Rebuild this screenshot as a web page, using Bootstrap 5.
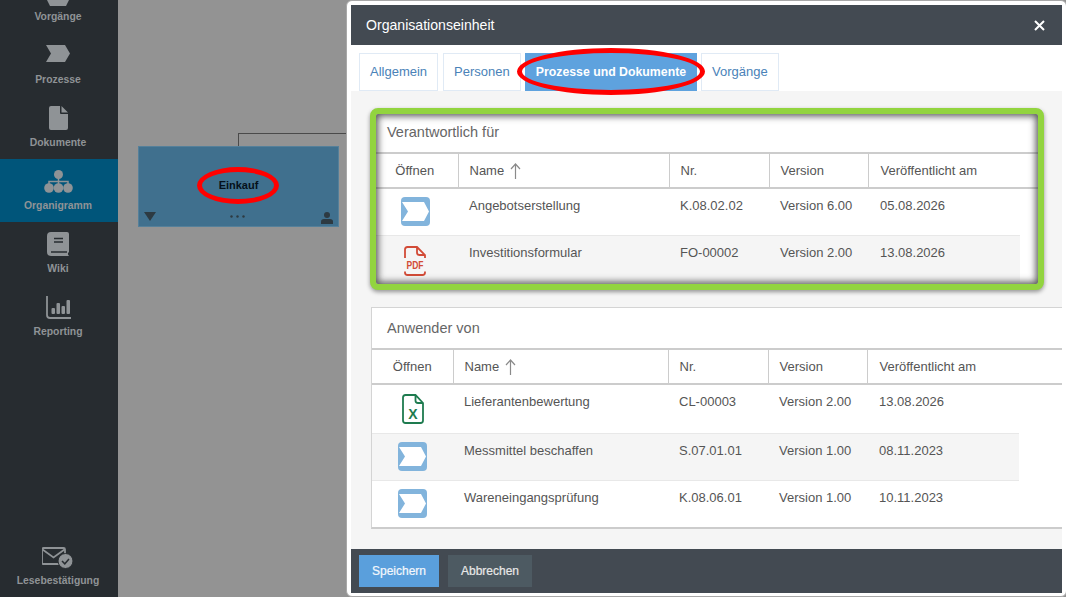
<!DOCTYPE html>
<html lang="de">
<head>
  <meta charset="utf-8">
  <title>Organisationseinheit</title>
  <meta name="viewport" content="width=device-width, initial-scale=1">
  <link href="https://cdn.jsdelivr.net/npm/bootstrap@5.3.3/dist/css/bootstrap.min.css" rel="stylesheet">
  <style>
    html,body{height:100%;overflow:hidden}
    body{font-family:"Liberation Sans",Arial,sans-serif;font-size:13px;background:#939393}
    .side-nav{width:118px;flex:none;background:#272c30;overflow:hidden}
    .side-item{height:63px;flex:none;padding:8px 2px 0 0;color:#8f9396;font-size:10.4px;font-weight:700;line-height:14px;text-decoration:none}
    .side-item:hover{color:#8f9396}
    .side-item.active{background:#00557a}
    .side-first{margin-top:-30px}
    .side-icon{height:28px;margin-bottom:4px}
    .side-icon svg{display:block}
    .side-last{padding-top:11px}
    .side-last .side-icon{margin-bottom:1px}
    .work-area{background:#939393}
    .org-line{position:absolute;left:120px;top:133px;width:110px;height:13px;border-top:1px solid #4a4a4a;border-left:1px solid #4a4a4a}
    .org-node{position:absolute;left:20px;top:146px;width:201px;height:81px;background:#40708e;border:1px solid #55809a;font-size:11px;font-weight:700;color:#05101a}
    .org-node .node-label{padding-top:28px;line-height:20px}
    .node-tri{position:absolute;left:5px;bottom:5px;width:0;height:0;border-left:6px solid transparent;border-right:6px solid transparent;border-top:9px solid #2d3a42}
    .node-dots{position:absolute;left:91px;bottom:8px;display:block}
    .node-user{position:absolute;right:5px;bottom:2px;display:block}
    .red-ring{position:absolute;border:5.5px solid #f00;border-radius:50%;pointer-events:none;z-index:5}
    .ring-node{left:79px;top:167px;width:82px;height:37px}
    .ring-tab{left:170px;top:47px;width:188px;height:47px}
    .dlg{position:absolute;left:228px;top:0;right:-1px;bottom:0;width:auto;padding:4px 4px 3px 4px;border:1px solid #a8a8a8;border-radius:6px;background:#fff;overflow:hidden;color:#555}
    .dlg .modal-header{height:40px;flex:none;padding:1px 17px 0 15px;background:#434a52;color:#fff;border:0;border-radius:0;font-size:14.1px}
    .dlg-close{padding:0;border:0;background:none;line-height:0}
    .tab-bar{flex:none;height:46px;padding:8px 0 0 8px}
    .tab-bar li:first-child{margin-right:1px}
    .tab-link{height:38px;padding:0 10px;line-height:36px;border:1px solid #e0eaf5;border-radius:0;color:#4a82b8;font-size:13px}
    .tab-link.active,.tab-link.active:hover{background:#5ea2de;border-color:#5ea2de;color:#fff;font-weight:700;font-size:12.3px}
    .dlg .modal-body{flex:1 1 auto;padding:17px 0 0 0;background:#f5f5f5;overflow:hidden;min-height:0}
    .box-green{position:relative;width:674px;height:182px;margin:0 0 17px 19px;border:6px solid #92d43f;border-radius:8px;background:#fff;box-shadow:0 2px 4px rgba(0,0,0,.4);overflow:hidden}
    .box-green::after{content:"";position:absolute;inset:-1px;box-shadow:inset 0 0 7px 3px rgba(40,40,40,.8);pointer-events:none}
    .box-plain{width:710px;margin-left:20px;border:1px solid #d4d4d4;border-bottom:2px solid #ccc;border-right:0;border-radius:0;background:#fff}
    .sect-head{height:38px;padding:0 0 0 11px;line-height:36px;font-size:14.5px;color:#666;background:#fff;border:0;border-radius:0}
    .box-plain .sect-head{height:40px;padding-left:15px;line-height:41px}
    .doc-table{--bs-table-bg:transparent;table-layout:fixed;width:100%;margin:0;color:#555;font-size:13px;line-height:16px}
    .doc-table th{height:35px;padding:0 0 0 11px;font-weight:400;vertical-align:middle;border-top:2px solid #ccc;border-bottom:2px solid #ccc;border-left:1px solid #ccc}
    .doc-table th:first-child{padding:0 4px 0 0;border-left:0;text-align:center}
    .doc-table td{height:47px;padding:9px 0 0 11px;vertical-align:top;border-bottom:1px solid #e8e8e8;border-top:0}
    .doc-table td:first-child{padding:8px 4px 0 0;text-align:center;line-height:0}
    .doc-table th:nth-child(5),.doc-table td:nth-child(5){padding-left:12px}
    .doc-table td:last-child{background:#fff;border-bottom:0;padding:0}
    .doc-table tbody tr:nth-child(even) td:not(:last-child){background:#f5f5f5}
    .doc-table tbody tr:last-child td{border-bottom:0}
    .doc-table tr.row-tall td{height:49px}
    .doc-table tr.row-tall td:first-child{padding-top:9px}
    .box-plain .doc-table th:first-child,.box-plain .doc-table td:first-child{padding-right:0}
    .ic-low{margin-top:2px}
    .sort-arrow{margin-left:2px;vertical-align:-4px;margin-top:-4px}
    .dlg .modal-footer{flex:none;height:44px;padding:6px 0 0 8px;background:#434a52;border:0;border-radius:0;justify-content:flex-start;align-items:flex-start;gap:9px}
    .dlg .modal-footer .btn{margin:0;height:32px;padding:0;border:0;border-radius:0;font-size:12px;line-height:32px;-webkit-text-stroke:.2px}
    .btn-save{width:80px;background:#5a9fdc;color:#f4f8fc}
    .btn-cancel{width:84px;background:#4d5a62;color:#e8e8e8}
  </style>
</head>
<body class="d-flex">

<svg class="d-none">
  <symbol id="ic-process" viewBox="0 0 29 29">
    <rect width="29" height="29" rx="4" fill="#82b4dc"/>
    <polygon points="1,5 23,5 28,14.5 23,24 1,24 7,14.5" fill="#fff"/>
  </symbol>
  <symbol id="ic-pdf" viewBox="0 0 22 30">
    <path d="M1 12V3.5Q1 1 3.5 1H13L21 9V12M13 1V6.5Q13 9 15.500 9H21M1 25.500V26.500Q1 29 3.500 29H18.500Q21 29 21 26.500V25.500" fill="none" stroke="#d24b37" stroke-width="1.800"/>
    <text x="11" y="23" text-anchor="middle" font-family="Liberation Sans" font-weight="700" font-size="11" textLength="17" lengthAdjust="spacingAndGlyphs" fill="#d24b37">PDF</text>
  </symbol>
  <symbol id="ic-xls" viewBox="0 0 22 30">
    <path d="M3.500 1H13.500L21 9V26.500Q21 29 18.500 29H3.500Q1 29 1 26.500V3.500Q1 1 3.500 1ZM13.500 1V6.500Q13.500 9 16 9H21" fill="none" stroke="#1e7b4f" stroke-width="1.800"/>
    <text x="11" y="24.500" text-anchor="middle" font-family="Liberation Sans" font-weight="700" font-size="14" fill="#1e7b4f">X</text>
  </symbol>
  <symbol id="ic-up" viewBox="0 0 11 16">
    <path d="M5.500 16V1M1 6L5.500 1L10 6" fill="none" stroke="#8a8a8a" stroke-width="1.200"/>
  </symbol>
</svg>

<nav class="side-nav d-flex flex-column">
  <a class="side-item side-first d-flex flex-column align-items-center" href="#">
    <span class="side-icon d-flex align-items-end"><svg width="24" height="24" viewBox="0 0 24 24"><path d="M1 2H23V18L20 24H4L1 18Z" fill="#8f9396"/></svg></span>
    Vorgänge
  </a>
  <a class="side-item d-flex flex-column align-items-center" href="#">
    <span class="side-icon d-flex align-items-start"><svg class="mt-1" width="24" height="17" viewBox="0 0 24 17"><polygon points="0,0 19,0 24,8.500 19,17 0,17 5,8.500" fill="#8f9396"/></svg></span>
    Prozesse
  </a>
  <a class="side-item d-flex flex-column align-items-center" href="#">
    <span class="side-icon d-flex align-items-center"><svg width="19" height="24" viewBox="0 0 19 24"><path d="M2 0H11V7Q11 8 12 8H19V22Q19 24 17 24H2Q0 24 0 22V2Q0 0 2 0ZM12.500 0L19 6.500H12.500Z" fill="#8f9396"/></svg></span>
    Dokumente
  </a>
  <a class="side-item active d-flex flex-column align-items-center" href="#">
    <span class="side-icon d-flex align-items-center"><svg width="29" height="23" viewBox="0 0 29 23"><g fill="#8f9396"><circle cx="14.500" cy="4.500" r="4.500"/><circle cx="5" cy="18" r="4.800"/><circle cx="14.500" cy="18" r="4.800"/><circle cx="24" cy="18" r="4.800"/></g><path d="M14.500 8V14M5 14V11.500H24V14" fill="none" stroke="#8f9396" stroke-width="1.500"/></svg></span>
    Organigramm
  </a>
  <a class="side-item d-flex flex-column align-items-center" href="#">
    <span class="side-icon d-flex align-items-center"><svg width="22" height="24" viewBox="0 0 22 24"><path d="M4 0H20Q22 0 22 2V20L21 21V22.500L22 24H4Q0 24 0 20V4Q0 0 4 0Z" fill="#8f9396"/><path d="M7 6.500H16M7 10H16M4 20H20" stroke="#272c30" stroke-width="1.600"/></svg></span>
    Wiki
  </a>
  <a class="side-item d-flex flex-column align-items-center" href="#">
    <span class="side-icon d-flex align-items-center"><svg width="25" height="23" viewBox="0 0 25 23"><path d="M1 0V19Q1 22 4 22H25" fill="none" stroke="#8f9396" stroke-width="1.800"/><g fill="#8f9396"><rect x="5.500" y="12" width="3.500" height="6" rx="1"/><rect x="10.500" y="7" width="3.500" height="11" rx="1"/><rect x="15.500" y="10" width="3.500" height="8" rx="1"/><rect x="20.500" y="4" width="3.500" height="14" rx="1"/></g></svg></span>
    Reporting
  </a>
  <a class="side-item side-last mt-auto d-flex flex-column align-items-center" href="#">
    <span class="side-icon d-flex align-items-center"><svg width="32" height="24" viewBox="1 0 32 24"><rect x="1" y="1" width="23" height="16" rx="1.500" fill="none" stroke="#8f9396" stroke-width="1.800"/><path d="M1.500 2.500L12.500 10.500L23.500 2.500" fill="none" stroke="#8f9396" stroke-width="1.800"/><circle cx="24.500" cy="14" r="7.500" fill="#8f9396" stroke="#272c30" stroke-width="1"/><path d="M21 14L23.800 16.800L28 12" fill="none" stroke="#272c30" stroke-width="1.500"/></svg></span>
    Lesebestätigung
  </a>
</nav>

<main class="work-area flex-grow-1 position-relative">
  <div class="org-line"></div>
  <div class="org-node text-center">
    <div class="node-label">Einkauf</div>
    <span class="node-tri"></span>
    <svg class="node-dots" width="15" height="3" viewBox="0 0 15 3"><g fill="#2d3a42"><circle cx="1.500" cy="1.500" r="1.200"/><circle cx="7.500" cy="1.500" r="1.200"/><circle cx="13.500" cy="1.500" r="1.200"/></g></svg>
    <svg class="node-user" width="12" height="12" viewBox="0 0 12 12"><g fill="#2d3a42"><circle cx="6" cy="3" r="3"/><path d="M0 12V9.500Q0 7 3 7H9Q12 7 12 9.500V12Z"/></g></svg>
  </div>
  <div class="red-ring ring-node"></div>

  <section class="dlg modal-content d-flex flex-column">
    <header class="modal-header d-flex justify-content-between">
      <span>Organisationseinheit</span>
      <button class="dlg-close" type="button" aria-label="Schließen">
        <svg width="11" height="11" viewBox="0 0 11 11"><path d="M1 1L10 10M10 1L1 10" stroke="#fff" stroke-width="2"/></svg>
      </button>
    </header>

    <ul class="nav tab-bar gap-1">
      <li class="nav-item"><a class="nav-link tab-link" href="#">Allgemein</a></li>
      <li class="nav-item"><a class="nav-link tab-link" href="#">Personen</a></li>
      <li class="nav-item"><a class="nav-link tab-link active" href="#">Prozesse und Dokumente</a></li>
      <li class="nav-item"><a class="nav-link tab-link" href="#">Vorgänge</a></li>
    </ul>
    <div class="red-ring ring-tab"></div>

    <div class="modal-body">
      <div class="card box-green">
        <div class="card-header sect-head">Verantwortlich für</div>
        <table class="table doc-table">
          <colgroup><col style="width:82px"><col style="width:211px"><col style="width:100px"><col style="width:99px"><col style="width:152px"><col></colgroup>
          <thead>
            <tr><th>Öffnen</th><th>Name <svg class="sort-arrow" width="11" height="16"><use href="#ic-up"/></svg></th><th>Nr.</th><th>Version</th><th colspan="2">Veröffentlicht am</th></tr>
          </thead>
          <tbody>
            <tr><td><svg width="29" height="29"><use href="#ic-process"/></svg></td><td>Angebotserstellung</td><td>K.08.02.02</td><td>Version 6.00</td><td>05.08.2026</td><td></td></tr>
            <tr><td><svg class="ic-low" width="22" height="30"><use href="#ic-pdf"/></svg></td><td>Investitionsformular</td><td>FO-00002</td><td>Version 2.00</td><td>13.08.2026</td><td></td></tr>
          </tbody>
        </table>
      </div>

      <div class="card box-plain">
        <div class="card-header sect-head">Anwender von</div>
        <table class="table doc-table">
          <colgroup><col style="width:81px"><col style="width:215px"><col style="width:100px"><col style="width:99px"><col style="width:152px"><col></colgroup>
          <thead>
            <tr><th>Öffnen</th><th>Name <svg class="sort-arrow" width="11" height="16"><use href="#ic-up"/></svg></th><th>Nr.</th><th>Version</th><th colspan="2">Veröffentlicht am</th></tr>
          </thead>
          <tbody>
            <tr class="row-tall"><td><svg width="22" height="30"><use href="#ic-xls"/></svg></td><td>Lieferantenbewertung</td><td>CL-00003</td><td>Version 2.00</td><td>13.08.2026</td><td></td></tr>
            <tr><td><svg width="29" height="29"><use href="#ic-process"/></svg></td><td>Messmittel beschaffen</td><td>S.07.01.01</td><td>Version 1.00</td><td>08.11.2023</td><td></td></tr>
            <tr><td><svg width="29" height="29"><use href="#ic-process"/></svg></td><td>Wareneingangsprüfung</td><td>K.08.06.01</td><td>Version 1.00</td><td>10.11.2023</td><td></td></tr>
          </tbody>
        </table>
      </div>
    </div>

    <footer class="modal-footer">
      <button class="btn btn-save" type="button">Speichern</button>
      <button class="btn btn-cancel" type="button">Abbrechen</button>
    </footer>
  </section>
</main>

<script src="https://cdn.jsdelivr.net/npm/bootstrap@5.3.3/dist/js/bootstrap.bundle.min.js"></script>
</body>
</html>
